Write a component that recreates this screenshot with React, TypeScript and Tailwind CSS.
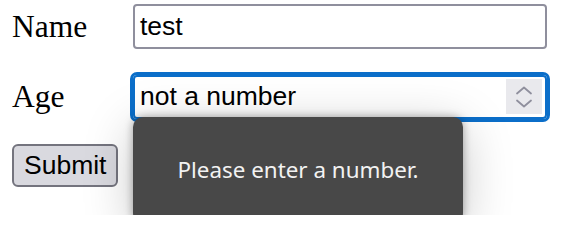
import React from "react";

export default function App() {
  const serif = { fontFamily: '"Liberation Serif", "Times New Roman", serif' };
  return (
    <div className="relative w-[585px] h-[215px] overflow-hidden bg-white">
      <form
        className="flex flex-col gap-[23px] pl-[12px] pt-[3px]"
        onSubmit={(e) => e.preventDefault()}
      >
        <div className="flex items-center">
          <label className="w-[121px] text-[31.5px] text-black" style={serif}>
            Name
          </label>
          <div className="w-[414px] h-[45px] border-2 border-[#8f8f9d] rounded-[4px] flex items-center px-[5px] font-['Liberation_Sans',Arial,sans-serif] text-[26.5px] text-black">
            test
          </div>
        </div>
        <div className="flex items-center">
          <label className="w-[121px] text-[31.5px] text-black" style={serif}>
            Age
          </label>
          <div className="w-[414px] h-[44px] border-2 border-[#0b6ec9] outline-[3px] outline-solid outline-[#0b6ec9] rounded-[4px] flex items-center pl-[5px] pr-[3px] font-['Liberation_Sans',Arial,sans-serif] text-[26.5px] text-black">
            <span className="flex-1">not a number</span>
            <div className="w-[36px] h-[35px] bg-[#e9e9ed] flex flex-col items-center justify-center gap-[4px]">
              <svg width="18" height="9" viewBox="0 0 18 9" fill="none">
                <path d="M2 7.5 L9 1.5 L16 7.5" stroke="#8f8f9d" strokeWidth="1.8" strokeLinecap="round" strokeLinejoin="round" />
              </svg>
              <svg width="18" height="9" viewBox="0 0 18 9" fill="none">
                <path d="M2 1.5 L9 7.5 L16 1.5" stroke="#8f8f9d" strokeWidth="1.8" strokeLinecap="round" strokeLinejoin="round" />
              </svg>
            </div>
          </div>
        </div>
        <div>
          <button
            type="submit"
            className="h-[43px] px-[10px] border-2 border-[#74747e] rounded-[6px] bg-[#d9d9df] font-['Liberation_Sans',Arial,sans-serif] text-[26.5px] text-black"
          >
            Submit
          </button>
        </div>
      </form>
      <div className="absolute left-[133px] top-[117px] w-[330px] h-[106px] rounded-[10px] bg-[#484848] flex items-center justify-center shadow-[0_0_8px_rgba(0,0,0,0.35),0_10px_50px_rgba(0,0,0,0.22)]">
        <span className="font-['Noto_Sans',sans-serif] text-[22.4px] text-[#f2f2f2]">
          Please enter a number.
        </span>
      </div>
    </div>
  );
}
